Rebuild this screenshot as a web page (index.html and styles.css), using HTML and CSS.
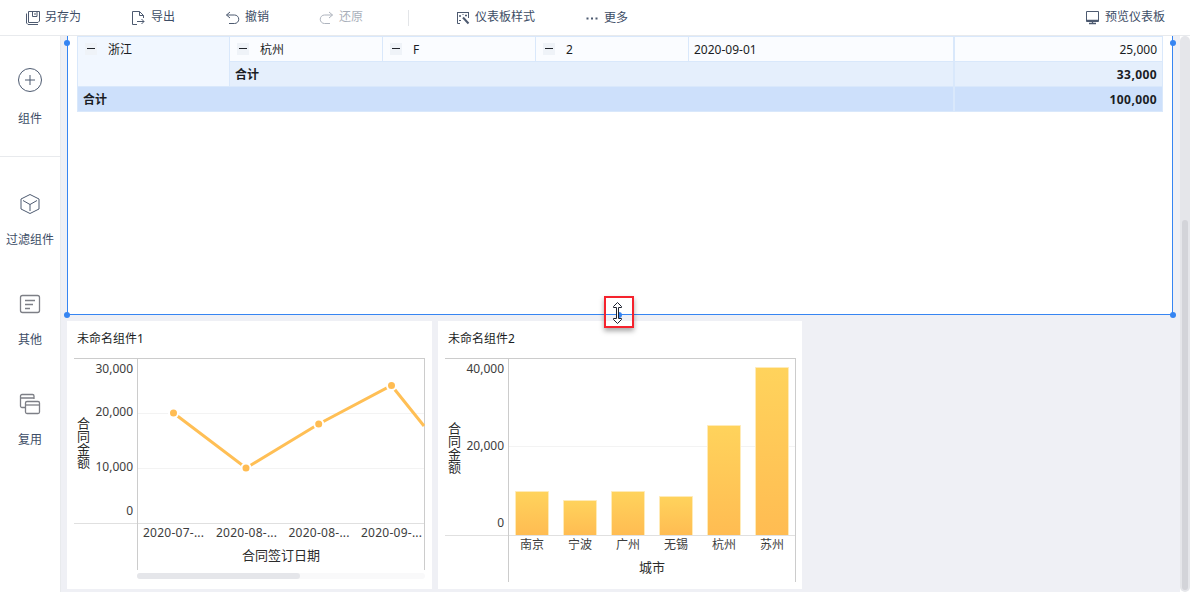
FILE: index.html
```html
<!DOCTYPE html>
<html lang="zh-CN">
<head>
    <meta charset="UTF-8">
    <meta name="viewport" content="width=device-width, initial-scale=1.0">
    <title>仪表板</title>
    <link rel="stylesheet" href="styles.css">
</head>
<body>
    <div class="toolbar">
        <div class="tool tool-save">
            <svg width="16" height="16" viewBox="0 0 16 16"><path d="M3.500 1.500h11v9.500l-1.500 1.500h-9.500zM7.500 1.500v5h4.500v-5M10 3v2M1.500 3.500v9.500l1.500 1.500h10"/></svg>
            <span>另存为</span>
        </div>
        <div class="tool tool-export">
            <svg width="16" height="16" viewBox="0 0 16 16"><path d="M6 14.500H1.500v-13h7l4 4V8M8.500 1.500v4h4M6 11.500h7M10.500 9l2.500 2.500-2.500 2.500"/></svg>
            <span>导出</span>
        </div>
        <div class="tool tool-undo">
            <svg width="16" height="16" viewBox="0 0 16 16"><path d="M5 2L1.500 5 5 8M1.500 5h8a4 4 0 0 1 0 8.500H4"/></svg>
            <span>撤销</span>
        </div>
        <div class="tool tool-redo disabled">
            <svg width="16" height="16" viewBox="0 0 16 16"><path d="M10 2l3.500 3L10 8M13.500 5h-8a4 4 0 0 0 0 8.500H11"/></svg>
            <span>还原</span>
        </div>
        <div class="separator"></div>
        <div class="tool tool-style">
            <svg width="16" height="16" viewBox="0 0 16 16"><path d="M5 13.500H2.500v-11h11V8M2 2.500h12"/><path d="M8 7.500l5.500 6" stroke-width="2"/><path d="M4 6h2M5 5v2M10 5.500h2M11 4.500v2M4 10.500h2M7.500 4.500h1"/></svg>
            <span>仪表板样式</span>
        </div>
        <div class="tool tool-more">
            <svg width="12" height="16" viewBox="0 0 12 16"><path d="M.5 8.500h2M5 8.500h2M9.500 8.500h2" stroke-width="2"/></svg>
            <span>更多</span>
        </div>
        <div class="tool tool-preview">
            <svg width="16" height="16" viewBox="0 0 16 16"><path d="M1.500 1.500h12v10h-12z"/><path d="M1.500 10.500h12M4 13.500h7M7.500 11v2" stroke-width="1.300"/></svg>
            <span>预览仪表板</span>
        </div>
    </div>

    <div class="workspace">
        <div class="sidebar">
            <div class="side-item side-first">
                <svg width="28" height="28" viewBox="0 0 28 28"><circle cx="14" cy="14" r="11.500"/><path d="M14 9v10M9 14h10"/></svg>
                <span>组件</span>
            </div>
            <div class="side-item">
                <svg width="28" height="28" viewBox="0 0 28 28"><path d="M14 4.500l9 4.500v10l-9 4.500-9-4.500V9zM7 10.500l7 4 7-4M14 14.500V21"/></svg>
                <span>过滤组件</span>
            </div>
            <div class="side-item side-other">
                <svg width="28" height="28" viewBox="0 0 28 28"><rect x="4.500" y="5.500" width="19" height="17" rx="2"/><path d="M9 10.500h10M9 14.500h8M9 18.500h5"/></svg>
                <span>其他</span>
            </div>
            <div class="side-item side-other">
                <svg width="28" height="28" viewBox="0 0 28 28"><path d="M9 17.500H6a1.500 1.500 0 0 1-1.500-1.500V6A1.500 1.500 0 0 1 6 4.500h10.500A1.500 1.500 0 0 1 18 6v3M4.500 8h13.500"/><rect x="9.500" y="11.500" width="14" height="12" rx="1.500"/><path d="M9.500 15h14"/></svg>
                <span>复用</span>
            </div>
        </div>

        <div class="canvas">
            <div class="widget-table">
                <div class="grid">
                    <div class="cell group"><i class="fold"></i>浙江</div>
                    <div class="cell"><i class="fold"></i>杭州</div>
                    <div class="cell"><i class="fold"></i>F</div>
                    <div class="cell"><i class="fold"></i>2</div>
                    <div class="cell date">2020-09-01</div>
                    <div class="cell value">25,000</div>
                    <div class="cell subtotal">合计</div>
                    <div class="cell value subtotal-value">33,000</div>
                    <div class="cell total">合计</div>
                    <div class="cell value total-value">100,000</div>
                </div>
                <i class="handle top-left"></i>
                <i class="handle top-right"></i>
                <i class="handle bottom-left"></i>
                <i class="handle bottom-right"></i>
                <i class="handle bottom-center"></i>
                <div class="resize-mark">
                    <svg width="26" height="28" viewBox="0 0 26 28"><path d="M11.500 4.500L7.500 8.500v1h3v11h-3v1l4 4 4-4v-1h-3v-11h3v-1z"/></svg>
                </div>
            </div>

            <div class="cards">
                <div class="card">
                    <div class="card-title">未命名组件1</div>
                    <svg class="chart" width="365" height="215" viewBox="67 358 365 215">
                        <path class="grid-line" d="M138 413.500H424M138 468.500H424"/>
                        <path class="axis-line" d="M74 523.500H424"/>
                        <path class="frame" d="M74 358.500H425M137.500 358V570M424.500 358V570"/>
                        <path class="line" d="M173.500 413L246 468L318.700 424L391.500 385.500L424 426"/>
                        <g class="dots">
                            <circle cx="173.500" cy="413" r="4.500"/>
                            <circle cx="246" cy="468" r="4.500"/>
                            <circle cx="318.700" cy="424" r="4.500"/>
                            <circle cx="391.500" cy="385.500" r="4.500"/>
                        </g>
                        <g class="y-labels">
                            <text x="133" y="373">30,000</text>
                            <text x="133" y="416">20,000</text>
                            <text x="133" y="471">10,000</text>
                            <text x="133" y="515">0</text>
                        </g>
                        <g class="x-labels">
                            <text x="173.500" y="537" textLength="61">2020-07-...</text>
                            <text x="246.500" y="537" textLength="61">2020-08-...</text>
                            <text x="319" y="537" textLength="61">2020-08-...</text>
                            <text x="391.500" y="537" textLength="61">2020-09-...</text>
                        </g>
                        <g class="axis-title">
                            <text class="vertical" x="83" y="442.500">合同金额</text>
                            <text x="281" y="560">合同签订日期</text>
                        </g>
                    </svg>
                    <div class="chart-scroll"><div class="chart-thumb"></div></div>
                </div>

                <div class="card card-bar">
                    <div class="card-title">未命名组件2</div>
                    <svg class="chart" width="364" height="228" viewBox="438 358 364 228">
                        <defs>
                            <linearGradient id="barFill" x1="0" y1="0" x2="0" y2="1">
                                <stop offset="0" stop-color="#ffd35c"/>
                                <stop offset="1" stop-color="#ffbc52"/>
                            </linearGradient>
                        </defs>
                        <path class="grid-line" d="M509 446.500H795"/>
                        <path class="axis-line" d="M445 535.500H795"/>
                        <path class="frame" d="M445 358.500H796M508.500 358V582M795.500 358V582"/>
                        <g class="bars">
                            <path d="M515.500 535V491.500H548.500V535"/>
                            <path d="M563.500 535V500.500H596.500V535"/>
                            <path d="M611.500 535V491.500H644.500V535"/>
                            <path d="M659.500 535V496.500H692.500V535"/>
                            <path d="M707.500 535V425.500H740.500V535"/>
                            <path d="M755.500 535V367.500H788.500V535"/>
                        </g>
                        <g class="y-labels">
                            <text x="504" y="373">40,000</text>
                            <text x="504" y="450">20,000</text>
                            <text x="504" y="527">0</text>
                        </g>
                        <g class="x-labels">
                            <text x="532" y="549">南京</text>
                            <text x="580" y="549">宁波</text>
                            <text x="628" y="549">广州</text>
                            <text x="676" y="549">无锡</text>
                            <text x="724" y="549">杭州</text>
                            <text x="772" y="549">苏州</text>
                        </g>
                        <g class="axis-title">
                            <text class="vertical" x="454" y="448">合同金额</text>
                            <text x="652" y="572">城市</text>
                        </g>
                    </svg>
                </div>
            </div>
        </div>
        <div class="scroll-track"><div class="scroll-thumb"></div></div>
    </div>
</body>
</html>
```
FILE: styles.css
```css
* {
    box-sizing: border-box;
}
body {
    margin: 0;
    width: 1190px;
    height: 592px;
    overflow: hidden;
    display: flex;
    flex-direction: column;
    background-color: white;
    font-family: "Noto Sans", "Noto Sans CJK SC", sans-serif;
    font-size: 12px;
    color: #1a1d24;
}
svg {
    display: block;
    flex: none;
}

/* toolbar */
.toolbar {
    display: flex;
    align-items: center;
    flex: none;
    height: 36px;
    padding: 0 25px;
    border-bottom: 1px solid #e8eaed;
    color: #3d4d66;
}
.tool {
    display: flex;
    align-items: center;
    gap: 4px;
    height: 32px;
    line-height: 30px;
    white-space: nowrap;
}
.tool span {
    padding-bottom: 2px;
}
.tool svg, .side-item svg {
    fill: none;
    stroke: #4d5a70;
    stroke-width: 1;
}
.tool-export {
    margin-left: 50px;
}
.tool-undo {
    margin-left: 50px;
}
.tool-redo {
    margin-left: 50px;
}
.disabled {
    opacity: 0.45;
}
.separator {
    width: 1px;
    height: 16px;
    margin: 0 46px 0 45px;
    background-color: #e3e5e8;
}
.tool-more {
    margin-left: 51px;
    gap: 6px;
}
.tool-more span {
    padding-bottom: 0;
}
.tool-preview {
    margin-left: auto;
}

/* left menu */
.workspace {
    display: flex;
    flex: 1;
    min-height: 0;
}
.sidebar {
    width: 60px;
    flex: none;
    color: #3d4d66;
}
.side-item {
    display: flex;
    flex-direction: column;
    align-items: center;
    height: 100px;
    gap: 12px;
    line-height: 20px;
    white-space: nowrap;
}
.side-first {
    height: 121px;
    margin-bottom: 33px;
    padding-top: 30px;
    gap: 15px;
    border-bottom: 1px solid #e8eaed;
}
.side-other svg {
    stroke: #7d7f86;
    stroke-width: 1.3;
}

/* canvas */
.canvas {
    width: 1120px;
    padding-left: 6px;
    background-color: #eff0f5;
    border-left: 1px solid #e8eaed;
}
.widget-table {
    position: relative;
    width: 1106px;
    height: 279px;
    padding-left: 9px;
    background-color: white;
    border: 1px solid #3685f2;
    border-top: none;
}
.grid {
    display: grid;
    grid-template-columns: 152px 153px 153px 153px 265px 209px;
    grid-template-rows: 26px 25px 25px;
    width: 1086px;
    border-left: 1px solid #d9e8fb;
}
.cell {
    display: flex;
    align-items: center;
    padding-top: 2px;
    padding-left: 7px;
    background-color: #fafcff;
    border-right: 1px solid #d9e8fb;
    border-bottom: 1px solid #d9e8fb;
    line-height: 22px;
}
.grid .cell:nth-child(-n+6) {
    border-top: 1px solid #d9e8fb;
}
.fold {
    width: 12px;
    height: 12px;
    margin-top: -2px;
    margin-right: 11px;
    background: linear-gradient(#20242b, #20242b) 2px 5px / 8px 1px no-repeat #eff3f8;
}
.group {
    grid-row: span 2;
    align-items: flex-start;
    background-color: #f1f7ff;
}
.group .fold {
    margin-top: 4px;
}
.date {
    padding-left: 5px;
}
.value {
    justify-content: flex-end;
    padding-right: 5px;
    border-left: 1px solid #d9e8fb;
}
.subtotal {
    grid-column: 2 / 6;
    padding-left: 5px;
    background-color: #e5effc;
    font-weight: bold;
}
.subtotal-value {
    background-color: #e5effc;
    font-weight: bold;
    letter-spacing: 0.4px;
}
.total {
    grid-column: 1 / 6;
    padding-left: 5px;
    background-color: #cde0fb;
    font-weight: bold;
}
.total-value {
    background-color: #cde0fb;
    font-weight: bold;
    letter-spacing: 0.4px;
}
.handle {
    position: absolute;
    width: 6px;
    height: 6px;
    border-radius: 50%;
    background-color: #3685f2;
}
.top-left {
    top: 4px;
    left: -4px;
}
.top-right {
    top: 4px;
    right: -4px;
}
.bottom-left {
    bottom: -4px;
    left: -4px;
}
.bottom-right {
    bottom: -4px;
    right: -4px;
}
.bottom-center {
    bottom: -4px;
    left: 548px;
}
.resize-mark {
    position: absolute;
    left: 536px;
    top: 260px;
    width: 30px;
    height: 32px;
    border: 2px solid #f5222d;
    box-shadow: 0 3px 5px rgba(0, 0, 0, 0.35);
}
.resize-mark svg {
    fill: white;
    stroke: #1c2230;
}

/* chart cards */
.cards {
    display: flex;
    gap: 6px;
    margin-top: 6px;
}
.card {
    width: 365px;
    height: 268px;
    background-color: white;
}
.card-bar {
    width: 364px;
}
.card-title {
    height: 37px;
    padding-left: 10px;
    line-height: 36px;
}
.chart {
    fill: none;
}
.frame {
    stroke: #cccccc;
}
.axis-line {
    stroke: #e0e0e0;
}
.grid-line {
    stroke: #f3f3f3;
}
.line {
    stroke: #ffbf55;
    stroke-width: 3;
}
.dots {
    fill: #ffbc52;
    stroke: white;
    stroke-width: 2;
}
.bars {
    fill: url(#barFill);
    stroke: #ffebb8;
}
.y-labels {
    fill: #3d3d3d;
    text-anchor: end;
}
.x-labels {
    fill: #3d3d3d;
    text-anchor: middle;
}
.axis-title {
    fill: #2b2b2b;
    font-size: 13px;
    text-anchor: middle;
}
.vertical {
    writing-mode: vertical-rl;
}
.chart-scroll {
    width: 288px;
    height: 6px;
    margin-left: 70px;
    border-radius: 3px;
    background-color: #f9f9fa;
}
.chart-thumb {
    width: 163px;
    height: 6px;
    border-radius: 3px;
    background-color: #e5e6ea;
}

/* page scrollbar */
.scroll-track {
    width: 10px;
    padding: 184px 2px 0;
    border-radius: 5px;
    background-color: #e5e6ea;
}
.scroll-thumb {
    width: 6px;
    height: 370px;
    border-radius: 3px;
    background-color: #d3d4d9;
}
```
